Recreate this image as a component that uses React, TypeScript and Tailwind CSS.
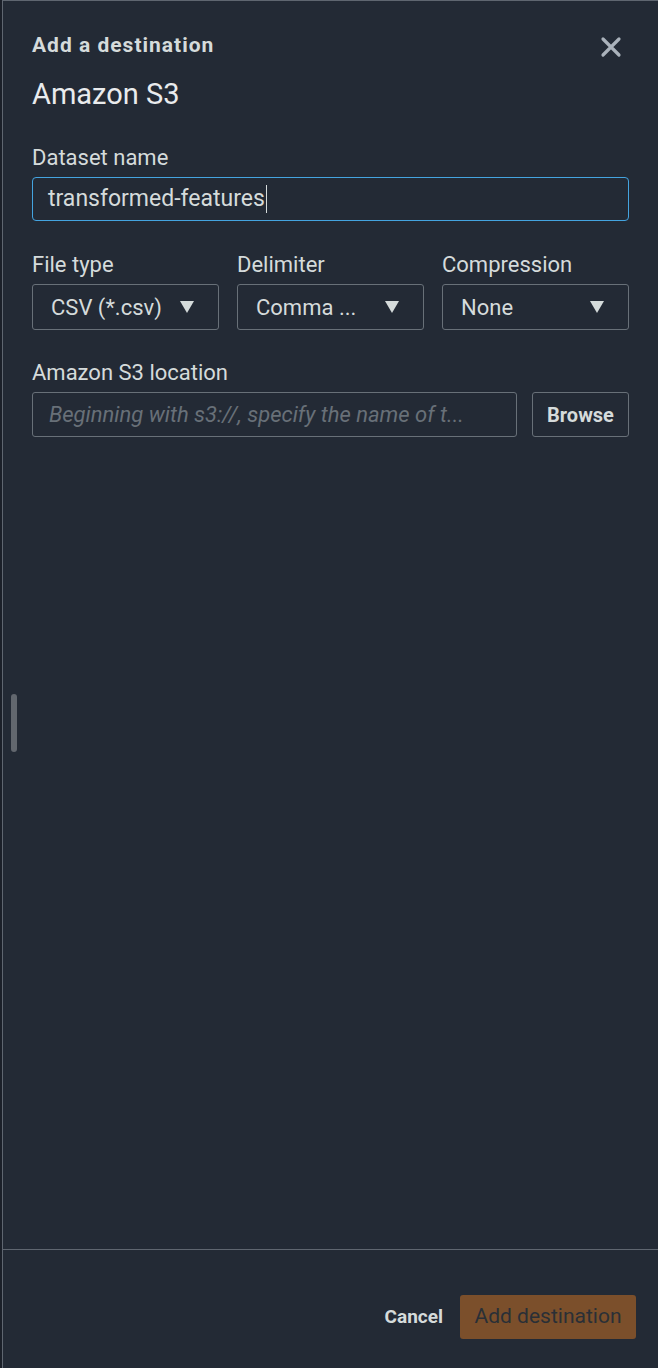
import React from "react";

function Caret() {
  return (
    <svg width="16" height="14" viewBox="0 0 16 14" className="shrink-0">
      <path d="M1 1 L15 1 L8 13 Z" fill="#d5dbdb" />
    </svg>
  );
}

function Select({ value }: { value: string }) {
  return (
    <div className="flex h-[46px] min-w-0 items-center justify-between gap-2 rounded-[3px] border border-[#687078] pl-[18px] pr-[23px]">
      <span className="whitespace-nowrap text-[22px] text-[#d5dbdb]">{value}</span>
      <Caret />
    </div>
  );
}

export default function App() {
  return (
    <div
      className="flex h-[1368px] w-[658px] overflow-hidden bg-[#1b2029]"
      style={{ fontFamily: "Roboto, 'Liberation Sans', sans-serif" }}
    >
      <div className="relative ml-[2px] flex w-[656px] min-w-0 flex-col border-l border-t border-[#5f6670] bg-[#232a35]">
        <div className="absolute left-[8px] top-[693px] h-[58px] w-[6px] rounded-full bg-[#62676e]" />
        <div className="min-w-0 flex-1 pl-[29px] pr-[29px]">
          <div className="flex items-start justify-between pt-[32px]">
            <div className="text-[21px] font-bold leading-[24px] tracking-[1px] text-[#d5dbdb]">
              Add a destination
            </div>
            <svg width="24" height="24" viewBox="0 0 24 24" className="mr-[6px] mt-[2px]">
              <path d="M4 4 L20 20 M20 4 L4 20" stroke="#aab2bb" strokeWidth="3.2" strokeLinecap="round" />
            </svg>
          </div>
          <div className="mt-[18px] text-[29px] leading-[34px] text-[#e9ebed]">Amazon S3</div>

          <div className="mt-[35px] text-[22px] leading-[24px] text-[#d5dbdb]">Dataset name</div>
          <div className="mt-[7px] flex h-[44px] items-center rounded-[4px] border border-[#44a4e0] pl-[15px]">
            <span className="text-[23px] text-[#d5dbdb]">transformed-features</span>
            <span className="ml-[1px] h-[28px] w-[1px] bg-[#d5dbdb]" />
          </div>

          <div className="mt-[32px] grid grid-cols-3 gap-x-[18px]">
            {[
              ["File type", "CSV (*.csv)"],
              ["Delimiter", "Comma ..."],
              ["Compression", "None"],
            ].map(([label, value]) => (
              <div key={label} className="flex min-w-0 flex-col">
                <div className="text-[22px] leading-[24px] text-[#d5dbdb]">{label}</div>
                <div className="mt-[7px]">
                  <Select value={value} />
                </div>
              </div>
            ))}
          </div>

          <div className="mt-[31px] text-[22px] leading-[24px] text-[#d5dbdb]">Amazon S3 location</div>
          <div className="mt-[7px] flex gap-[15px]">
            <div className="flex h-[45px] min-w-0 flex-1 items-center rounded-[3px] border border-[#687078] px-[16px]">
              <span className="whitespace-nowrap text-[22px] italic text-[#687078]">
                Beginning with s3://, specify the name of t...
              </span>
            </div>
            <div className="flex h-[45px] w-[97px] shrink-0 items-center justify-center rounded-[3px] border border-[#687078] text-[20px] font-bold text-[#d5dbdb]">
              Browse
            </div>
          </div>
        </div>

        <div className="flex h-[119px] items-start justify-end border-t border-[#5f6670] pr-[22px] pt-[45px]">
          <div className="flex items-center gap-[15px]">
            <div className="px-[2px] text-[19px] font-bold text-[#d5dbdb]">Cancel</div>
            <div className="flex h-[44px] w-[176px] items-center justify-center rounded-[3px] bg-[#7b4f2b] text-[21px] text-[#2a2f36]">
              Add destination
            </div>
          </div>
        </div>
      </div>
    </div>
  );
}
